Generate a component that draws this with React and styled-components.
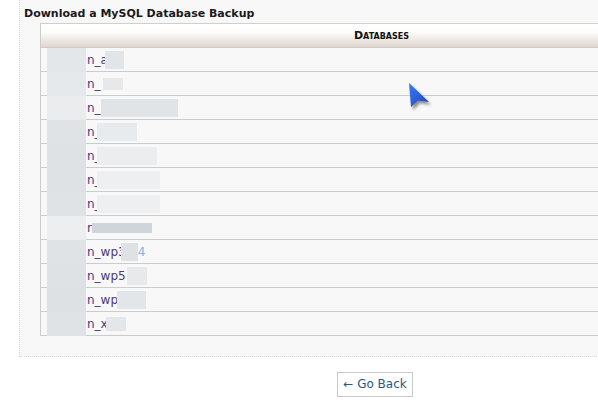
import React from 'react';
import styled, { createGlobalStyle } from 'styled-components';

const GlobalStyle = createGlobalStyle`
  html, body {
    margin: 0;
    padding: 0;
    background: #ffffff;
    overflow: hidden;
  }
  body {
    font-family: "DejaVu Sans", Verdana, sans-serif;
    font-size: 12px;
    color: #333;
  }
`;

const Page = styled.div`
  width: 742px;
  padding-left: 19px;
  position: relative;
`;

const Panel = styled.div`
  background: #f8f8f8;
  border-left: 1px dotted #dcdcdc;
  border-bottom: 1px dotted #dcdcdc;
  padding: 7px 20px 20px 4px;
`;

const Title = styled.h3`
  margin: 0 0 3px 0;
  font-size: 11px;
  font-weight: bold;
  color: #1a1a1a;
  line-height: 13px;
`;

const Table = styled.table`
  margin-left: 16px;
  width: 682px;
  border-collapse: separate;
  border-spacing: 0;
  border-left: 1px solid #cccccc;
`;

const HeadCell = styled.th`
  height: 23px;
  padding: 0;
  border-top: 1px solid #cfcfcf;
  border-bottom: 1px solid #cccccc;
  background: linear-gradient(to bottom, #ffffff 0%, #fdfcfb 35%, #e1d6ce 100%);
  font-size: 11px;
  font-weight: bold;
  font-variant: small-caps;
  color: #111;
  text-align: center;
  vertical-align: middle;
`;

const Cell = styled.td`
  height: 23px;
  padding: 0 0 0 6px;
  border-bottom: 1px solid #cccccc;
  white-space: nowrap;
  vertical-align: top;
`;

const CellInner = styled.div`
  display: flex;
  align-items: center;
  height: 23px;
`;

const SideMask = styled.span`
  display: block;
  align-self: flex-start;
  width: 39px;
  height: 24px;
  margin-bottom: -1px;
  margin-right: 1px;
  position: relative;
  background: ${p => p.$shade};
`;

const Name = styled.span`
  color: ${p => p.$light ? '#7fb4e6' : '#4a3c7c'};
  font-size: 12px;
  line-height: 14px;
`;

const Mask = styled.span`
  display: inline-block;
  width: ${p => p.$w}px;
  height: ${p => p.$h || 18}px;
  margin-left: ${p => p.$ml || 0}px;
  background: ${p => p.$shade || '#dfe3e6'};
`;

const Footer = styled.div`
  display: flex;
  justify-content: center;
  padding-top: 15px;
  padding-right: 30px;
`;

const BackButton = styled.a`
  display: inline-block;
  border: 1px solid #c8c8c8;
  background: #ffffff;
  padding: 4px 5px 5px 5px;
  font-size: 12px;
  line-height: 14px;
  color: #1f5a86;
  text-decoration: none;
`;

const Cursor = styled.svg`
  position: absolute;
  left: 405px;
  top: 81px;
`;

const rows = [
  { name: 'n_a', mask: 19, ml: -3, shade: '#e2e5e8', side: '#e4e7ea' },
  { name: 'n_', mask: 20, ml: 2, shade: '#e6e8ea', side: '#e6e9eb', h: 12 },
  { name: 'n_', mask: 77, ml: 0, shade: '#e1e4e7', side: '#eaecee' },
  { name: 'n_', mask: 40, ml: -4, shade: '#e8ebed', side: '#e0e3e6' },
  { name: 'n_', mask: 60, ml: -4, shade: '#ecedef', side: '#dfe2e5' },
  { name: 'n_', mask: 63, ml: -4, shade: '#eeeff1', side: '#dfe2e5' },
  { name: 'n_', mask: 63, ml: -4, shade: '#eeeff1', side: '#e0e3e6' },
  { name: 'r', mask: 60, ml: 0, shade: '#cfd5da', side: '#eceeef', h: 10 },
  { name: 'n_wp3', mask: 17, ml: -5, shade: '#dfe2e5', side: '#e0e3e6', tail: '4' },
  { name: 'n_wp5', mask: 20, ml: 1, shade: '#e7e9eb', side: '#dfe2e5' },
  { name: 'n_wp', mask: 29, ml: -1, shade: '#e3e6e8', side: '#dee1e4' },
  { name: 'n_x', mask: 20, ml: -2, shade: '#e4e7e9', side: '#e0e3e6', h: 14 },
];

export default function App() {
  return (
    <>
      <GlobalStyle />
      <Page>
        <Panel>
          <Title>Download a MySQL Database Backup</Title>
          <Table>
            <thead>
              <tr>
                <HeadCell>Databases</HeadCell>
              </tr>
            </thead>
            <tbody>
              {rows.map((r, i) => (
                <tr key={i}>
                  <Cell>
                    <CellInner>
                      <SideMask $shade={r.side} />
                      <Name>{r.name}</Name>
                      <Mask $w={r.mask} $ml={r.ml} $shade={r.shade} $h={r.h} />
                      {r.tail && <Name $light>{r.tail}</Name>}
                    </CellInner>
                  </Cell>
                </tr>
              ))}
            </tbody>
          </Table>
        </Panel>
        <Footer>
          <BackButton href="#">← Go Back</BackButton>
        </Footer>
        <Cursor width="30" height="32" viewBox="0 0 30 32">
          <defs>
            <linearGradient id="cg" x1="0" y1="0" x2="1" y2="1">
              <stop offset="0" stopColor="#3c78f0" />
              <stop offset="1" stopColor="#1848c8" />
            </linearGradient>
            <filter id="cs" x="-30%" y="-30%" width="170%" height="170%">
              <feGaussianBlur stdDeviation="1.6" />
            </filter>
          </defs>
          <path d="M6 5 L8 29 L15 22 L26 24 Z" fill="#000" opacity="0.45" filter="url(#cs)" />
          <path d="M4 2 L6 26 L13 19.5 L24 21 Z" fill="url(#cg)" />
        </Cursor>
      </Page>
    </>
  );
}
